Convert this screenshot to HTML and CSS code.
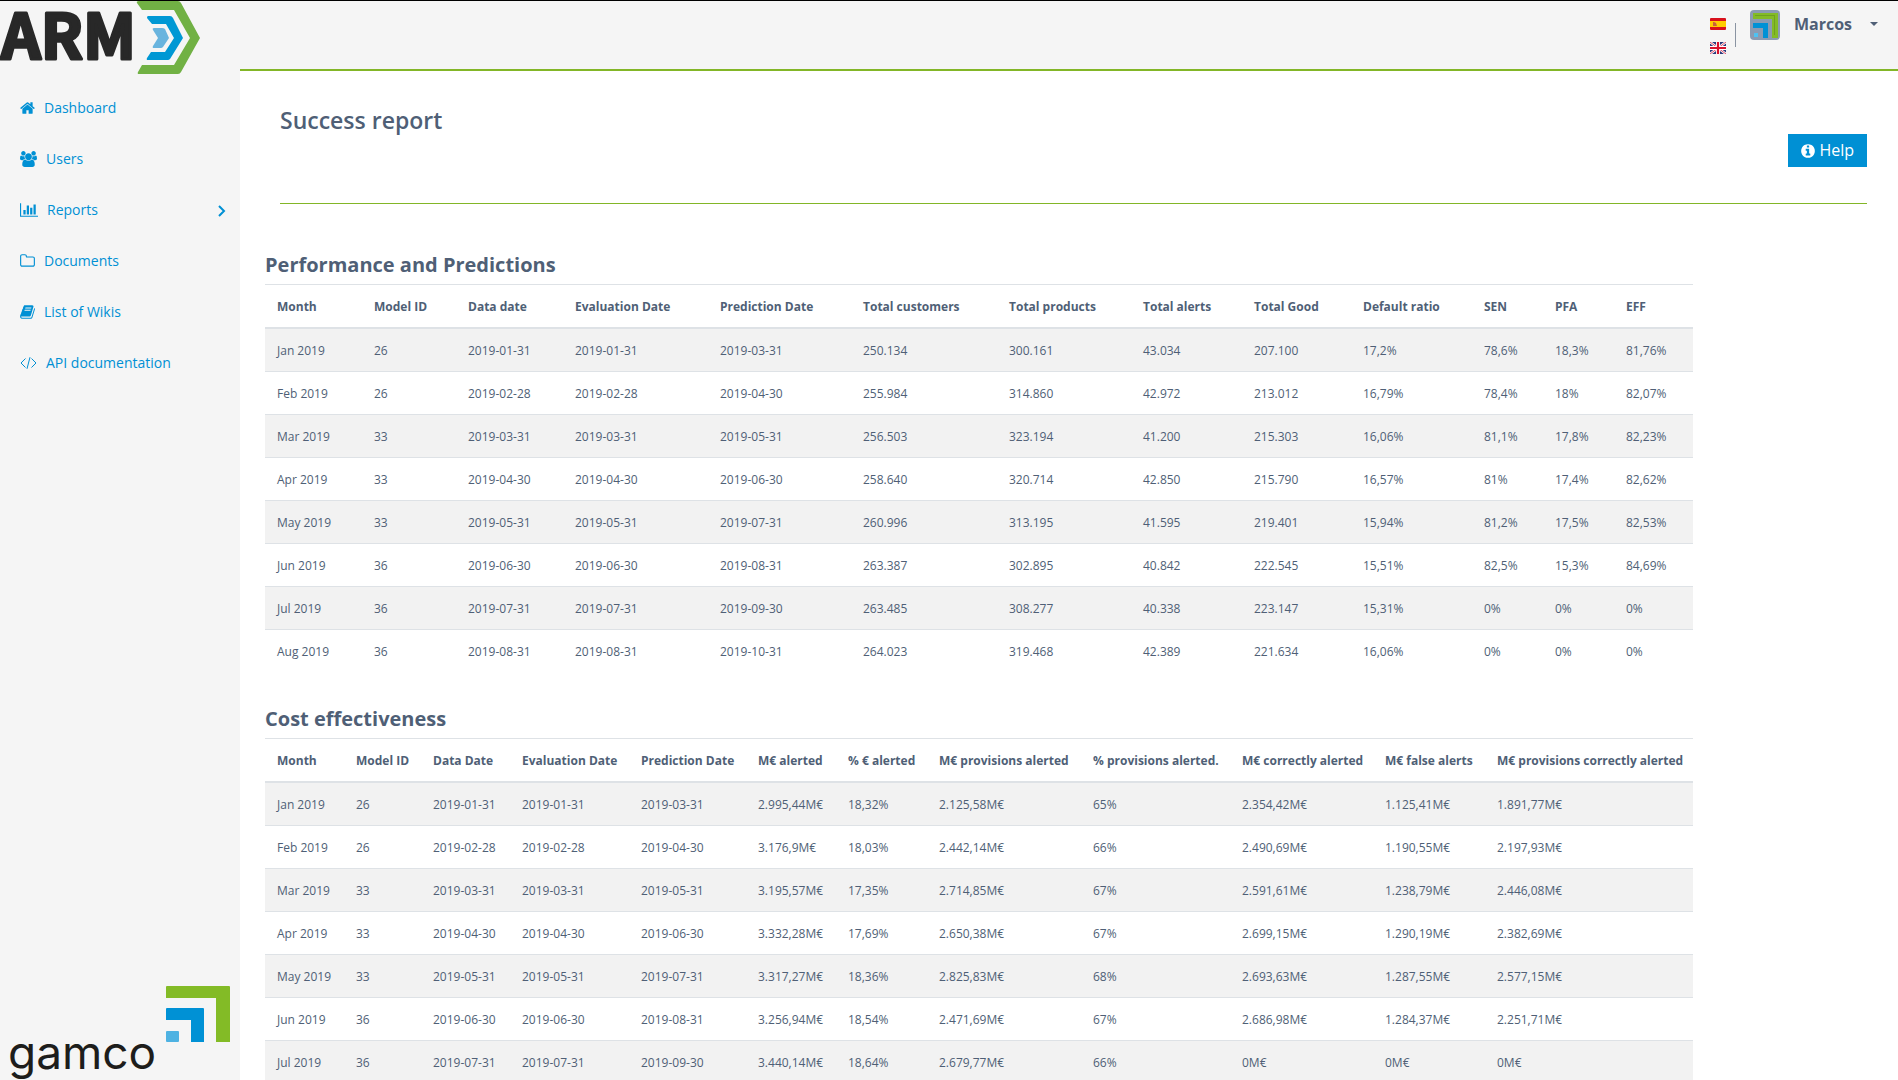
FILE: index.html
```html
<!DOCTYPE html>
<html lang="en">
<head>
<meta charset="utf-8">
<title>Success report</title>
<link rel="stylesheet" href="styles.css">
</head>
<body>
<div class="app">
  <aside class="sidebar">
    <a class="brand" href="#" aria-label="ARM">
      <svg width="200" height="74" viewBox="0 1 200 74">
        <text class="brand-text" x="1" y="59">ARM</text>
        <path fill="#71b144" d="M139 1h39q2 0 3 2l19 35-19 34q-1 2-3 2h-39q-2 0-1-2l4-7h32l16-27-16-28h-32l-5-7q-1-2 2-2z"/>
        <path fill="#0098d4" d="M148 16h22q2 0 3 2l10 20-13 21q-1 1-2 1h-20q-2 0-1-2l4-6h14l9-14-8-14h-14l-5-6q0-2 1-2z"/>
        <path fill="#69b4de" d="M154 28h8q2 0 3 1l4 9-6 9q-1 1-2 1h-7q-2 0-1-2l5-8-5-8q-1-2 1-2z"/>
      </svg>
    </a>
    <nav class="menu">
      <a href="#"><svg width="15" height="16" viewBox="64 0 1664 1792"><path d="M1472 992v480q0 26-19 45t-45 19h-384v-384h-256v384h-384q-26 0-45-19t-19-45v-480q0-1 .5-3t.5-3l575-474 575 474q1 2 1 6zm223-69l-62 74q-8 9-21 11h-3q-13 0-21-7l-692-577-692 577q-12 8-24 7-13-2-21-11l-62-74q-8-10-7-23.5t11-21.5l719-599q32-26 76-26t76 26l244 204v-195q0-14 9-23t23-9h192q14 0 23 9t9 23v408l219 182q10 8 11 21.5t-7 23.5z"/></svg>Dashboard</a>
      <a href="#"><svg width="17" height="16" viewBox="-64 0 1920 1792"><path d="M529 896q-162 5-265 128h-134q-82 0-138-40.5t-56-118.5q0-353 124-353 6 0 43.500 21t97.500 42.500 119 21.500q67 0 133-23-5 37-5 66 0 139 81 256zm1071 637q0 120-73 189.500t-194 69.500h-874q-121 0-194-69.500t-73-189.500q0-53 3.500-103.500t14-109 26.500-108.500 43-97.500 62-81 85.500-53.500 111.500-20q10 0 43 21.500t73 48 107 48 135 21.500 135-21.500 107-48 73-48 43-21.500q61 0 111.500 20t85.500 53.500 62 81 43 97.500 26.500 108.500 14 109 3.500 103.500zm-1024-1277q0 106-75 181t-181 75-181-75-75-181 75-181 181-75 181 75 75 181zm704 384q0 159-112.500 271.500t-271.500 112.500-271.500-112.500-112.500-271.500 112.500-271.500 271.500-112.500 271.500 112.500 112.500 271.500zm576 225q0 78-56 118.500t-138 40.500h-134q-103-123-265-128 81-117 81-256 0-29-5-66 66 23 133 23 59 0 119-21.500t97.500-42.500 43.500-21q124 0 124 353zm-128-609q0 106-75 181t-181 75-181-75-75-181 75-181 181-75 181 75 75 181z"/></svg>Users</a>
      <a href="#"><svg width="18" height="16" viewBox="0 0 2048 1792"><path d="M640 896v512h-256v-512h256zm384-512v1024h-256v-1024h256zm1024 1152v128h-2048v-1536h128v1408h1920zm-640-896v768h-256v-768h256zm384-384v1152h-256v-1152h256z"/></svg>Reports<svg class="chevron" width="8" height="12" viewBox="0 0 8 12"><path d="M1 1l5 5-5 5"/></svg></a>
      <a href="#"><svg width="15" height="16" viewBox="64 0 1664 1792"><path d="M1600 1312v-704q0-40-28-68t-68-28h-704q-40 0-68-28t-28-68v-64q0-40-28-68t-68-28h-320q-40 0-68 28t-28 68v960q0 40 28 68t68 28h1216q40 0 68-28t28-68zm128-704v704q0 92-66 158t-158 66h-1216q-92 0-158-66t-66-158v-960q0-92 66-158t158-66h320q92 0 158 66t66 158v32h672q92 0 158 66t66 158z"/></svg>Documents</a>
      <a href="#"><svg width="15" height="16" viewBox="64 0 1664 1792"><path d="M1703 478q40 57 18 129l-275 906q-19 64-76.500 107.500t-122.500 43.500h-923q-77 0-148.500-53.500t-99.500-131.500q-24-67-2-127 0-4 3-27t4-37q1-8-3-21.500t-3-19.500q2-11 8-21t16.500-23.500 16.500-23.500q23-38 45-91.500t30-91.500q3-10 .5-30t-.5-28q3-11 17-28t17-23q21-36 42-92t25-90q1-9-2.500-32t.5-28q4-13 22-30.500t22-22.500q19-26 42.500-84.500t27.500-96.500q1-8-3-25.500t-2-26.500q2-8 9-18t18-23 17-21q8-12 16.500-30.500t15-35 16-36 19.500-32 26.500-23.500 36-11.500 47.500 5.500l-1 3q38-9 51-9h761q74 0 114 56t18 130l-274 906q-36 119-71.500 153.500t-128.500 34.500h-869q-27 0-38 15-11 16-1 43 24 70 144 70h923q29 0 56-15.500t35-41.500l300-987q7-22 5-57 38 15 59 43zm-1064 2q-4 13 2 22.500t20 9.500h608q13 0 25.500-9.500t16.500-22.500l21-64q4-13-2-22.500t-20-9.500h-608q-13 0-25.500 9.500t-16.500 22.500zm-83 256q-4 13 2 22.500t20 9.500h608q13 0 25.500-9.500t16.500-22.500l21-64q4-13-2-22.500t-20-9.500h-608q-13 0-25.500 9.500t-16.500 22.500z"/></svg>List of Wikis</a>
      <a href="#"><svg class="line-icon" width="17" height="16" viewBox="0 0 17 16"><path d="M5.500 3.500L1 8l4.500 4.500M11.500 3.500L16 8l-4.500 4.500M10 2.200L7 13.800"/></svg>API documentation</a>
    </nav>
    <svg class="company" width="230" height="96" viewBox="0 -1 230 96">
      <text class="company-text" x="8" y="84">gamco</text>
      <path fill="#83bb26" d="M167 1h62q1 0 1 1v55h-14V13h-50V2q0-1 1-1z"/>
      <path fill="#0091d5" d="M167 23h36q1 0 1 1v33h-13V35h-25V24q0-1 1-1z"/>
      <rect fill="#4eb2e2" x="166" y="46" width="13" height="11" rx="1"/>
    </svg>
  </aside>

  <header class="topbar">
    <div class="languages">
      <a href="#" aria-label="Español"><svg width="16" height="12" viewBox="0 0 16 12"><rect width="16" height="12" rx="1" fill="#d8101c"/><path fill="#fc0" d="M0 3h16v6H0z"/><path fill="#c8603c" d="M3 4h1l2 1 1 3H3z"/></svg></a>
      <a href="#" aria-label="English"><svg width="16" height="12" viewBox="0 0 16 12"><rect width="16" height="12" rx="1" fill="#2b3a7c"/><path stroke="#fff" stroke-width="2.400" d="M0 0l16 12M16 0L0 12"/><path stroke="#d8203c" stroke-width=".8" d="M0 0l16 12M16 0L0 12"/><path stroke="#fff" stroke-width="4" d="M8 0v12M0 6h16"/><path stroke="#d8102c" stroke-width="2.200" d="M8 0v12M0 6h16"/></svg></a>
    </div>
    <button class="user" type="button">
      <svg width="30" height="30" viewBox="0 0 30 30"><rect width="30" height="30" rx="4" fill="#8b9bb2"/><path fill="#83bb26" d="M3 3h25v25h-6V9H3z"/><path fill="#6fa020" d="M5 5h20v20h-1V6H5z"/><path fill="#0091d5" d="M3 13h15v15h-5V18H3z"/><path fill="#4ec2f2" d="M4 23h4v4H4z"/></svg>
      <span>Marcos</span>
      <svg class="caret" width="8" height="4" viewBox="0 0 8 4"><path d="M0 0h8L4 4z"/></svg>
    </button>
  </header>

  <main class="content">
    <div class="title-bar">
      <h1>Success report</h1>
      <button class="help" type="button"><svg width="14" height="16" viewBox="128 0 1536 1792"><path d="M1152 1376v-160q0-14-9-23t-23-9h-96v-512q0-14-9-23t-23-9h-320q-14 0-23 9t-9 23v160q0 14 9 23t23 9h96v320h-96q-14 0-23 9t-9 23v160q0 14 9 23t23 9h448q14 0 23-9t9-23zm-128-896v-160q0-14-9-23t-23-9h-192q-14 0-23 9t-9 23v160q0 14 9 23t23 9h192q14 0 23-9t9-23zm640 416q0 209-103 385.500t-279.500 279.500-385.500 103-385.500-103-279.500-279.500-103-385.500 103-385.500 279.500-279.500 385.500-103 385.500 103 279.500 279.500 103 385.500z"/></svg>Help</button>
    </div>
    <div class="reports">
      <section>
        <h2 id="performance">Performance and Predictions</h2>
        <table class="performance" aria-labelledby="performance">
          <thead><tr><th>Month</th><th>Model ID</th><th>Data date</th><th>Evaluation Date</th><th>Prediction Date</th><th>Total customers</th><th>Total products</th><th>Total alerts</th><th>Total Good</th><th>Default ratio</th><th>SEN</th><th>PFA</th><th>EFF</th></tr></thead>
          <tbody>
            <tr><td>Jan 2019</td><td>26</td><td>2019-01-31</td><td>2019-01-31</td><td>2019-03-31</td><td>250.134</td><td>300.161</td><td>43.034</td><td>207.100</td><td>17,2%</td><td>78,6%</td><td>18,3%</td><td>81,76%</td></tr>
            <tr><td>Feb 2019</td><td>26</td><td>2019-02-28</td><td>2019-02-28</td><td>2019-04-30</td><td>255.984</td><td>314.860</td><td>42.972</td><td>213.012</td><td>16,79%</td><td>78,4%</td><td>18%</td><td>82,07%</td></tr>
            <tr><td>Mar 2019</td><td>33</td><td>2019-03-31</td><td>2019-03-31</td><td>2019-05-31</td><td>256.503</td><td>323.194</td><td>41.200</td><td>215.303</td><td>16,06%</td><td>81,1%</td><td>17,8%</td><td>82,23%</td></tr>
            <tr><td>Apr 2019</td><td>33</td><td>2019-04-30</td><td>2019-04-30</td><td>2019-06-30</td><td>258.640</td><td>320.714</td><td>42.850</td><td>215.790</td><td>16,57%</td><td>81%</td><td>17,4%</td><td>82,62%</td></tr>
            <tr><td>May 2019</td><td>33</td><td>2019-05-31</td><td>2019-05-31</td><td>2019-07-31</td><td>260.996</td><td>313.195</td><td>41.595</td><td>219.401</td><td>15,94%</td><td>81,2%</td><td>17,5%</td><td>82,53%</td></tr>
            <tr><td>Jun 2019</td><td>36</td><td>2019-06-30</td><td>2019-06-30</td><td>2019-08-31</td><td>263.387</td><td>302.895</td><td>40.842</td><td>222.545</td><td>15,51%</td><td>82,5%</td><td>15,3%</td><td>84,69%</td></tr>
            <tr><td>Jul 2019</td><td>36</td><td>2019-07-31</td><td>2019-07-31</td><td>2019-09-30</td><td>263.485</td><td>308.277</td><td>40.338</td><td>223.147</td><td>15,31%</td><td>0%</td><td>0%</td><td>0%</td></tr>
            <tr><td>Aug 2019</td><td>36</td><td>2019-08-31</td><td>2019-08-31</td><td>2019-10-31</td><td>264.023</td><td>319.468</td><td>42.389</td><td>221.634</td><td>16,06%</td><td>0%</td><td>0%</td><td>0%</td></tr>
          </tbody>
        </table>
      </section>
      <section>
        <h2 id="cost">Cost effectiveness</h2>
        <table class="cost" aria-labelledby="cost">
          <thead><tr><th>Month</th><th>Model ID</th><th>Data Date</th><th>Evaluation Date</th><th>Prediction Date</th><th>M€ alerted</th><th>% € alerted</th><th>M€ provisions alerted</th><th>% provisions alerted.</th><th>M€ correctly alerted</th><th>M€ false alerts</th><th>M€ provisions correctly alerted</th></tr></thead>
          <tbody>
            <tr><td>Jan 2019</td><td>26</td><td>2019-01-31</td><td>2019-01-31</td><td>2019-03-31</td><td>2.995,44M€</td><td>18,32%</td><td>2.125,58M€</td><td>65%</td><td>2.354,42M€</td><td>1.125,41M€</td><td>1.891,77M€</td></tr>
            <tr><td>Feb 2019</td><td>26</td><td>2019-02-28</td><td>2019-02-28</td><td>2019-04-30</td><td>3.176,9M€</td><td>18,03%</td><td>2.442,14M€</td><td>66%</td><td>2.490,69M€</td><td>1.190,55M€</td><td>2.197,93M€</td></tr>
            <tr><td>Mar 2019</td><td>33</td><td>2019-03-31</td><td>2019-03-31</td><td>2019-05-31</td><td>3.195,57M€</td><td>17,35%</td><td>2.714,85M€</td><td>67%</td><td>2.591,61M€</td><td>1.238,79M€</td><td>2.446,08M€</td></tr>
            <tr><td>Apr 2019</td><td>33</td><td>2019-04-30</td><td>2019-04-30</td><td>2019-06-30</td><td>3.332,28M€</td><td>17,69%</td><td>2.650,38M€</td><td>67%</td><td>2.699,15M€</td><td>1.290,19M€</td><td>2.382,69M€</td></tr>
            <tr><td>May 2019</td><td>33</td><td>2019-05-31</td><td>2019-05-31</td><td>2019-07-31</td><td>3.317,27M€</td><td>18,36%</td><td>2.825,83M€</td><td>68%</td><td>2.693,63M€</td><td>1.287,55M€</td><td>2.577,15M€</td></tr>
            <tr><td>Jun 2019</td><td>36</td><td>2019-06-30</td><td>2019-06-30</td><td>2019-08-31</td><td>3.256,94M€</td><td>18,54%</td><td>2.471,69M€</td><td>67%</td><td>2.686,98M€</td><td>1.284,37M€</td><td>2.251,71M€</td></tr>
            <tr><td>Jul 2019</td><td>36</td><td>2019-07-31</td><td>2019-07-31</td><td>2019-09-30</td><td>3.440,14M€</td><td>18,64%</td><td>2.679,77M€</td><td>66%</td><td>0M€</td><td>0M€</td><td>0M€</td></tr>
          </tbody>
        </table>
      </section>
    </div>
  </main>
</div>
</body>
</html>
```
FILE: styles.css
```css
* { box-sizing: border-box; }

body {
  margin: 0;
  font: 14px/21px "Open Sans", "Noto Sans", sans-serif;
  color: #4f5f76;
  background: #fff;
}

button { font: inherit; color: inherit; border: 0; cursor: pointer; }

.app {
  display: grid;
  grid-template: auto 1fr / 240px 1fr;
  height: 100vh;
  border-top: 1px solid #000;
}

/* Sidebar */
.sidebar {
  grid-row: 1 / 3;
  display: flex;
  flex-direction: column;
  min-height: 0;
  background: #f5f5f5;
}
.sidebar svg { display: block; flex: none; }
.brand-text {
  font: bold 62px "Noto Sans CJK SC", sans-serif;
  fill: #282828;
  stroke: #282828;
  stroke-width: 3;
  stroke-linejoin: round;
}
.menu { display: flex; flex-direction: column; padding-top: 7px; }
.menu a {
  display: flex;
  align-items: center;
  gap: 9px;
  padding: 15px 14px 15px 20px;
  color: #0090d4;
  text-decoration: none;
}
.menu svg { fill: currentColor; }
.menu .line-icon { fill: none; stroke: currentColor; }
.menu .chevron { margin: 2px 0 0 auto; fill: none; stroke: currentColor; stroke-width: 2; }
.company { margin-top: auto; }
.company-text { font: 46px Inter, sans-serif; fill: #1d1d1b; }

/* Top bar */
.topbar {
  display: flex;
  align-items: flex-start;
  height: 70px;
  padding: 9px 20px 0 0;
  justify-content: flex-end;
  background: #f5f5f5;
  border-bottom: 2px solid #83b627;
}
.languages {
  display: flex;
  flex-direction: column;
  gap: 12px;
  padding: 8px 10px 0 0;
  background: linear-gradient(#8a94a2, #8a94a2) right 13px / 1px 24px no-repeat;
}
.languages a, .languages svg { display: block; }
.user {
  display: flex;
  align-items: center;
  gap: 14px;
  padding: 0 0 0 14px;
  background: none;
  font-size: 16px;
  font-weight: 700;
}
.user span { padding-bottom: 2px; }
.user .caret { margin: 0 0 3px 4px; fill: currentColor; }

/* Content */
.content { min-height: 0; overflow: auto; scrollbar-width: none; }
.title-bar {
  display: flex;
  justify-content: space-between;
  align-items: flex-start;
  height: 133px;
  margin: 0 31px 0 40px;
  padding-top: 32px;
  border-bottom: 1px solid #83b627;
}
h1 { margin: 0; font-size: 23px; line-height: 34px; font-weight: 600; }
.help {
  display: flex;
  align-items: center;
  gap: 4px;
  height: 33px;
  margin-top: 31px;
  padding: 0 13px;
  background: #0090d4;
  color: #fff;
  font-size: 16px;
}
.help svg { fill: currentColor; }

.reports { padding: 45px 0 0 25px; }
h2 { margin: 0; padding: 1px 0 4px; font-size: 20px; line-height: 30px; font-weight: 700; }
section + section { padding-top: 31px; }
table {
  table-layout: fixed;
  width: 1428px;
  border-collapse: collapse;
  font-size: 12px;
  line-height: 18px;
  white-space: nowrap;
}
th, td { padding: 13px 0 11px 12px; text-align: left; border-top: 1px solid #dee2e6; }
thead th { border-bottom: 2px solid #dee2e6; }
tbody tr:nth-child(odd) { background: #f2f2f2; }

.performance th:nth-child(1) { width: 97px; }
.performance th:nth-child(2) { width: 94px; }
.performance th:nth-child(3) { width: 107px; }
.performance th:nth-child(4) { width: 145px; }
.performance th:nth-child(5) { width: 143px; }
.performance th:nth-child(6) { width: 146px; }
.performance th:nth-child(7) { width: 134px; }
.performance th:nth-child(8) { width: 111px; }
.performance th:nth-child(9) { width: 109px; }
.performance th:nth-child(10) { width: 121px; }
.performance th:nth-child(11) { width: 71px; }
.performance th:nth-child(12) { width: 71px; }

.cost th:nth-child(1) { width: 79px; }
.cost th:nth-child(2) { width: 77px; }
.cost th:nth-child(3) { width: 89px; }
.cost th:nth-child(4) { width: 119px; }
.cost th:nth-child(5) { width: 117px; }
.cost th:nth-child(6) { width: 90px; }
.cost th:nth-child(7) { width: 91px; }
.cost th:nth-child(8) { width: 154px; }
.cost th:nth-child(9) { width: 149px; }
.cost th:nth-child(10) { width: 143px; }
.cost th:nth-child(11) { width: 112px; }
```
